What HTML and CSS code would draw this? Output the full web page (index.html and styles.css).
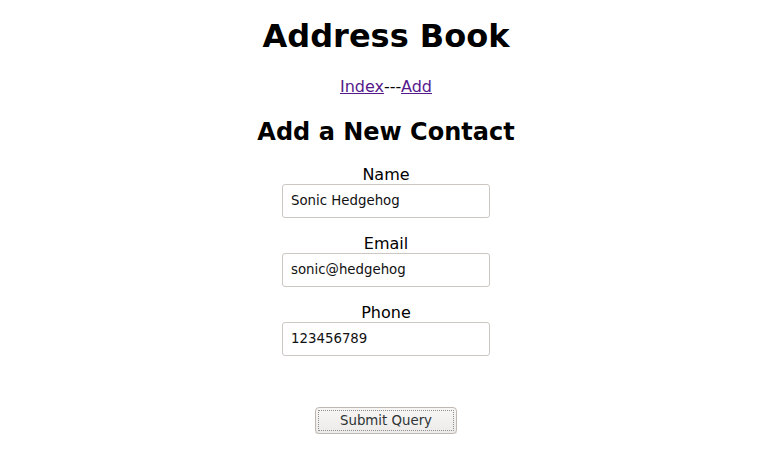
FILE: index.html
```html
<!DOCTYPE html>
<html>
<head>
<meta charset="utf-8">
<title>Address Book</title>
<link rel="stylesheet" href="styles.css">
</head>
<body>
<h1 class="title">Address Book</h1>
<p class="nav"><a href="#">Index</a>---<a href="#">Add</a></p>
<h2 class="subtitle">Add a New Contact</h2>
<form class="form">
  <div class="field">
    <label class="label" for="name">Name</label>
    <input class="input" id="name" type="text" value="Sonic Hedgehog">
  </div>
  <div class="field">
    <label class="label" for="email">Email</label>
    <input class="input" id="email" type="text" value="sonic@hedgehog">
  </div>
  <div class="field">
    <label class="label" for="phone">Phone</label>
    <input class="input" id="phone" type="text" value="123456789">
  </div>
  <div class="actions">
    <button class="submit" type="submit">Submit Query</button>
  </div>
</form>
</body>
</html>
```
FILE: styles.css
```css
html, body {
  margin: 0;
  padding: 0;
  background: #fff;
}
body {
  font-family: "DejaVu Sans", sans-serif;
  color: #000;
  text-align: center;
  padding: 1px 0 0 4px;
}
.title {
  font-size: 32px;
  font-weight: bold;
  line-height: 38px;
  margin: 16px 0 0;
}
.nav {
  font-size: 16px;
  line-height: 20px;
  margin: 22px 0 0;
}
.nav a {
  color: #551a8b;
}
.subtitle {
  font-size: 24px;
  font-weight: bold;
  line-height: 28px;
  margin: 21px 0 0;
}
.form {
  display: flex;
  flex-direction: column;
  align-items: center;
  margin-top: 19px;
}
.field {
  display: flex;
  flex-direction: column;
  align-items: center;
  margin-bottom: 16px;
}
.label {
  font-size: 16px;
  line-height: 19px;
  display: block;
}
.input {
  box-sizing: border-box;
  width: 208px;
  height: 34px;
  border: 1px solid #cdc7c2;
  border-radius: 3px;
  padding: 0 8px 2px;
  font-family: "DejaVu Sans", sans-serif;
  font-size: 13.33px;
  color: #111;
  background: #fff;
}
.actions {
  margin-top: 35px;
}
.submit {
  box-sizing: border-box;
  width: 142px;
  height: 27px;
  font-family: "DejaVu Sans", sans-serif;
  font-size: 13.33px;
  color: #2e3436;
  background: linear-gradient(#f7f6f5, #edebe9);
  border: 1px solid #bdb8b3;
  border-radius: 4px;
  box-shadow: 0 1px 0 #e0ddda;
  outline: 1px dotted #8f8f8f;
  outline-offset: -4px;
  padding: 0;
}
```
